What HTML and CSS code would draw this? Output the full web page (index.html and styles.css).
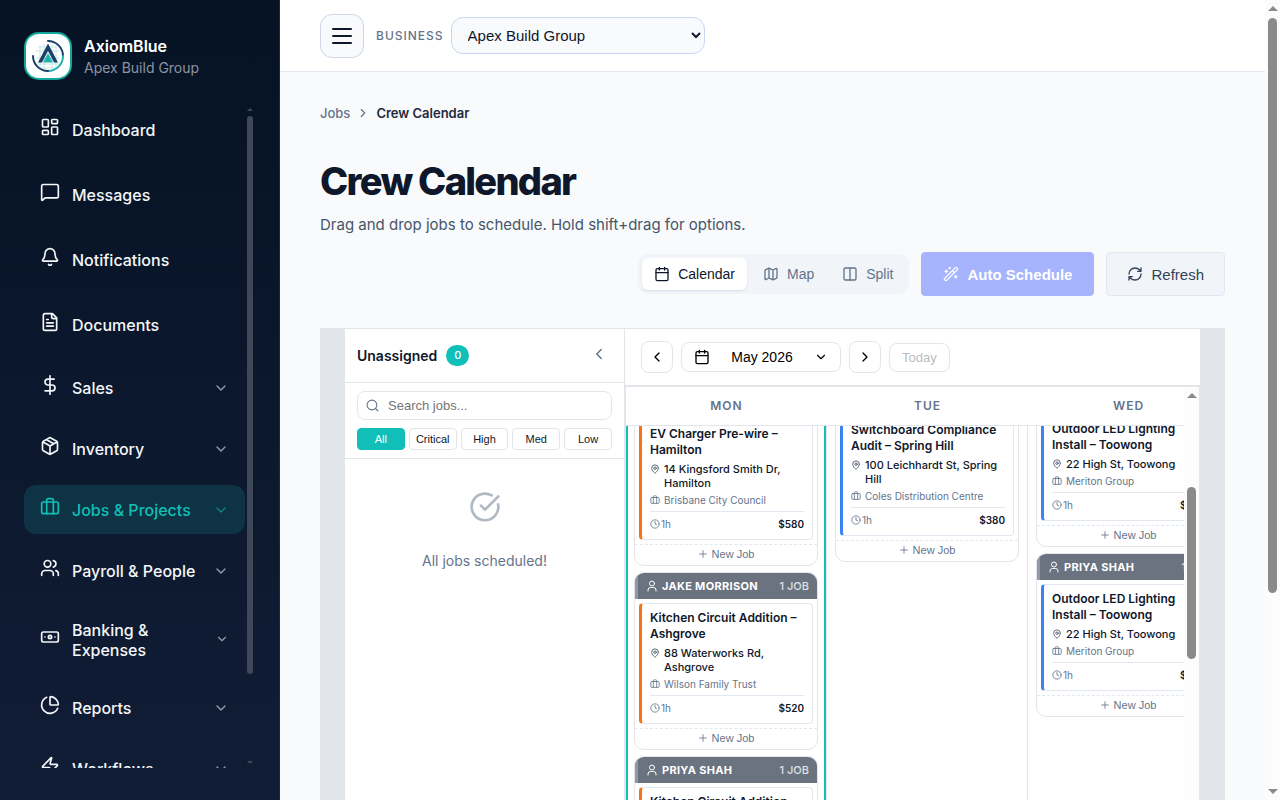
FILE: index.html
```html
<!DOCTYPE html>
<html lang="en">
<head>
<meta charset="utf-8">
<meta name="viewport" content="width=device-width, initial-scale=1">
<title>Crew Calendar</title>
<link rel="stylesheet" href="styles.css">
</head>
<body>
<svg class="sprite" aria-hidden="true">
  <symbol id="chev-down" viewBox="0 0 24 24"><path d="m6 9 6 6 6-6"/></symbol>
  <symbol id="chev-left" viewBox="0 0 24 24"><path d="m15 18-6-6 6-6"/></symbol>
  <symbol id="chev-right" viewBox="0 0 24 24"><path d="m9 18 6-6-6-6"/></symbol>
  <symbol id="calendar" viewBox="0 0 24 24"><path d="M8 2v4M16 2v4M3 10h18"/><rect x="3" y="4" width="18" height="18" rx="2"/></symbol>
  <symbol id="briefcase" viewBox="0 0 24 24"><path d="M16 20V4a2 2 0 0 0-2-2h-4a2 2 0 0 0-2 2v16"/><rect x="2" y="6" width="20" height="14" rx="2"/></symbol>
  <symbol id="pin" viewBox="0 0 24 24"><path d="M20 10c0 5-5.500 10.200-7.400 11.800a1 1 0 0 1-1.200 0C9.500 20.200 4 15 4 10a8 8 0 0 1 16 0"/><circle cx="12" cy="10" r="3"/></symbol>
  <symbol id="clock" viewBox="0 0 24 24"><circle cx="12" cy="12" r="10"/><path d="M12 6v6l4 2"/></symbol>
  <symbol id="user" viewBox="0 0 24 24"><circle cx="12" cy="7" r="5"/><path d="M4 22v-2a5 5 0 0 1 5-5h6a5 5 0 0 1 5 5v2"/></symbol>
  <symbol id="plus" viewBox="0 0 24 24"><path d="M4 12h16M12 4v16"/></symbol>
</svg>
<div class="app">
  <aside class="sidebar">
    <div class="brand">
      <svg class="logo" viewBox="0 0 48 48" aria-hidden="true">
        <rect x="1" y="1" width="46" height="46" rx="14" fill="#fff" stroke="#12a89d" stroke-width="2"/>
        <path d="M15 15h18M12 19h24M12 26h24M13 32h22M16 36h16M16 14v21M20 12v25M28 12v25M32 14v21" stroke="#c4e8e6" stroke-width="1" fill="none"/>
        <path d="M24 9a15 15 0 0 1 15 15" stroke="#1b4266" stroke-width="2" fill="none"/>
        <path d="M39 24a15 15 0 0 1-15 15" stroke="#20b2aa" stroke-width="2" fill="none"/>
        <path d="M24 39A15 15 0 0 1 9 24" stroke="#1b4266" stroke-width="2" fill="none"/>
        <path d="M14 30.500 24 11.500l10 19h-4l-6-11.500-6 11.500z" fill="#1b4266"/>
        <path d="m24 21 5 9.500H19z" fill="#20b2aa"/>
      </svg>
      <div>
        <div class="brand-name">AxiomBlue</div>
        <div class="brand-org">Apex Build Group</div>
      </div>
    </div>
    <div class="nav-wrap">
      <nav class="nav">
        <div class="nav-links">
          <a class="nav-item" href="#"><svg class="icon" viewBox="0 0 24 24"><rect x="3" y="3" width="7" height="9" rx="1"/><rect x="14" y="3" width="7" height="5" rx="1"/><rect x="14" y="12" width="7" height="9" rx="1"/><rect x="3" y="16" width="7" height="5" rx="1"/></svg><span>Dashboard</span></a>
          <a class="nav-item" href="#"><svg class="icon" viewBox="0 0 24 24"><path d="M22 17a2 2 0 0 1-2 2H6.800a2 2 0 0 0-1.400.6l-2.200 2.200A.7.7 0 0 1 2 21.300V5a2 2 0 0 1 2-2h16a2 2 0 0 1 2 2z"/></svg><span>Messages</span></a>
          <a class="nav-item" href="#"><svg class="icon" viewBox="0 0 24 24"><path d="M10.300 21a2 2 0 0 0 3.400 0M3.300 15.300A1 1 0 0 0 4 17h16a1 1 0 0 0 .7-1.700C19.400 14 18 12.500 18 8A6 6 0 0 0 6 8c0 4.500-1.400 6-2.700 7.300"/></svg><span>Notifications</span></a>
          <a class="nav-item" href="#"><svg class="icon" viewBox="0 0 24 24"><path d="M15 2H6a2 2 0 0 0-2 2v16a2 2 0 0 0 2 2h12a2 2 0 0 0 2-2V7zM14 2v4a2 2 0 0 0 2 2h4M10 9H8M16 13H8M16 17H8"/></svg><span>Documents</span></a>
        </div>
        <div class="nav-groups">
          <a class="nav-item" href="#"><svg class="icon" viewBox="0 0 24 24"><path d="M12 1v22M17 5H9.500a3.500 3.500 0 0 0 0 7h5a3.500 3.500 0 0 1 0 7H6"/></svg><span>Sales</span><svg class="chev"><use href="#chev-down"/></svg></a>
          <a class="nav-item" href="#"><svg class="icon" viewBox="0 0 24 24"><path d="M11 21.700a2 2 0 0 0 2 0l7-4A2 2 0 0 0 21 16V8a2 2 0 0 0-1-1.700l-7-4a2 2 0 0 0-2 0l-7 4A2 2 0 0 0 3 8v8a2 2 0 0 0 1 1.700zM12 22V12M3.300 7 12 12l8.700-5M7.500 4.300l9 5.100"/></svg><span>Inventory</span><svg class="chev"><use href="#chev-down"/></svg></a>
          <a class="nav-item active" href="#" aria-current="page"><svg class="icon"><use href="#briefcase"/></svg><span>Jobs &amp; Projects</span><svg class="chev"><use href="#chev-down"/></svg></a>
          <a class="nav-item" href="#"><svg class="icon" viewBox="0 0 24 24"><path d="M16 21v-2a4 4 0 0 0-4-4H6a4 4 0 0 0-4 4v2M16 3.100a4 4 0 0 1 0 7.800M22 21v-2a4 4 0 0 0-3-3.900"/><circle cx="9" cy="7" r="4"/></svg><span>Payroll &amp; People</span><svg class="chev"><use href="#chev-down"/></svg></a>
          <a class="nav-item tall" href="#"><svg class="icon" viewBox="0 0 24 24"><rect x="2" y="6" width="20" height="12" rx="2"/><circle cx="12" cy="12" r="2"/><path d="M6 12h.01M18 12h.01"/></svg><span>Banking &amp; Expenses</span><svg class="chev small"><use href="#chev-down"/></svg></a>
          <a class="nav-item" href="#"><svg class="icon" viewBox="0 0 24 24"><path d="M21 12a1 1 0 0 0 1-1A10 10 0 0 0 13 2a1 1 0 0 0-1 1v8a1 1 0 0 0 1 1zM21.200 15.900A10 10 0 1 1 8 2.800"/></svg><span>Reports</span><svg class="chev"><use href="#chev-down"/></svg></a>
          <a class="nav-item" href="#"><svg class="icon" viewBox="0 0 24 24"><path d="M4 14a1 1 0 0 1-.8-1.600l9.900-10.200a.5.5 0 0 1 .9.460l-1.900 6A1 1 0 0 0 13 10h7a1 1 0 0 1 .8 1.600l-9.900 10.200a.5.5 0 0 1-.9-.460l1.900-6A1 1 0 0 0 11 14z"/></svg><span>Workflows</span><svg class="chev"><use href="#chev-down"/></svg></a>
        </div>
      </nav>
      <div class="bar bar-nav" aria-hidden="true"><i class="up"></i><i class="thumb"></i><i class="down"></i></div>
    </div>
  </aside>

  <div class="main">
    <header class="topbar">
      <button class="menu-btn" aria-label="Toggle menu"><svg viewBox="0 0 20 16"><path d="M1 1h18M1 8h18M1 15h18"/></svg></button>
      <label class="biz-label" for="biz">BUSINESS</label>
      <select class="biz-select" id="biz"><option>Apex Build Group</option></select>
    </header>
    <main class="content">
      <nav class="crumbs" aria-label="Breadcrumb"><a href="#">Jobs</a><svg><use href="#chev-right"/></svg><span>Crew Calendar</span></nav>
      <h1>Crew Calendar</h1>
      <p class="lead">Drag and drop jobs to schedule. Hold shift+drag for options.</p>
      <div class="toolbar">
        <div class="segmented">
          <button class="seg on"><svg><use href="#calendar"/></svg>Calendar</button>
          <button class="seg"><svg viewBox="0 0 24 24"><path d="M14.100 5.600a2 2 0 0 0 1.800 0l3.700-1.900A1 1 0 0 1 21 4.600v12.800a1 1 0 0 1-.6.9l-4.500 2.200a2 2 0 0 1-1.800 0l-4.200-2.100a2 2 0 0 0-1.800 0l-3.700 1.900A1 1 0 0 1 3 19.400V6.600a1 1 0 0 1 .6-.9l4.500-2.200a2 2 0 0 1 1.800 0zM15 5.800v15M9 3.200v15"/></svg>Map</button>
          <button class="seg"><svg viewBox="0 0 24 24"><rect x="3" y="3" width="18" height="18" rx="2"/><path d="M12 3v18"/></svg>Split</button>
        </div>
        <button class="btn primary"><svg viewBox="0 0 24 24"><path d="m21.600 3.600-1.200-1.200a1.200 1.200 0 0 0-1.700 0L2.400 18.600a1.200 1.200 0 0 0 0 1.800l1.200 1.200a1.200 1.200 0 0 0 1.800 0L21.600 5.400a1.200 1.200 0 0 0 0-1.800M14 7l3 3M5 6v4M19 14v4M10 2v2M7 8H3M21 16h-4M11 3H9"/></svg>Auto Schedule</button>
        <button class="btn"><svg viewBox="0 0 24 24"><path d="M3 12a9 9 0 0 1 9-9 9.800 9.800 0 0 1 6.700 2.700L21 8M21 3v5h-5M21 12a9 9 0 0 1-9 9 9.800 9.800 0 0 1-6.700-2.700L3 16M8 16H3v5"/></svg>Refresh</button>
      </div>

      <section class="board">
        <div class="unassigned">
          <div class="un-head"><h2>Unassigned</h2><span class="badge">0</span><button aria-label="Collapse panel"><svg><use href="#chev-left"/></svg></button></div>
          <div class="un-filter">
            <div class="search"><svg viewBox="0 0 24 24"><circle cx="11" cy="11" r="9"/><path d="m22 22-4-4"/></svg><input type="text" placeholder="Search jobs..." aria-label="Search jobs"></div>
            <div class="chips"><button class="on">All</button><button>Critical</button><button>High</button><button>Med</button><button>Low</button></div>
          </div>
          <div class="empty"><svg viewBox="0 0 24 24"><path d="M21.800 10A10 10 0 1 1 17 3.300M9 11l3 3L22 4"/></svg><p>All jobs scheduled!</p></div>
        </div>
        <div class="schedule">
          <div class="cal-head">
            <button class="step" aria-label="Previous month"><svg><use href="#chev-left"/></svg></button>
            <button class="month"><svg><use href="#calendar"/></svg><span>May 2026</span><svg class="caret"><use href="#chev-down"/></svg></button>
            <button class="step" aria-label="Next month"><svg><use href="#chev-right"/></svg></button>
            <button class="today" disabled>Today</button>
          </div>
          <div class="cal-body">
            <div class="cal-view">
              <div class="days"><div>MON</div><div>TUE</div><div>WED</div></div>
              <div class="cells">
                <div class="grid">
                  <div class="col current">
                    <article class="crew">
                      <div class="lead-in"></div>
                      <div class="job high"><h3>EV Charger Pre-wire – Hamilton</h3><p class="addr"><svg><use href="#pin"/></svg>14 Kingsford Smith Dr, Hamilton</p><p class="client"><svg><use href="#briefcase"/></svg>Brisbane City Council</p><div class="meta"><svg><use href="#clock"/></svg>1h<strong>$580</strong></div></div>
                      <button class="new"><svg><use href="#plus"/></svg>New Job</button>
                    </article>
                    <article class="crew">
                      <header><svg><use href="#user"/></svg><b>JAKE MORRISON</b><span>1 JOB</span></header>
                      <div class="job high"><h3>Kitchen Circuit Addition – Ashgrove</h3><p class="addr"><svg><use href="#pin"/></svg>88 Waterworks Rd, Ashgrove</p><p class="client"><svg><use href="#briefcase"/></svg>Wilson Family Trust</p><div class="meta"><svg><use href="#clock"/></svg>1h<strong>$520</strong></div></div>
                      <button class="new"><svg><use href="#plus"/></svg>New Job</button>
                    </article>
                    <article class="crew">
                      <header><svg><use href="#user"/></svg><b>PRIYA SHAH</b><span>1 JOB</span></header>
                      <div class="job high"><h3>Kitchen Circuit Addition – Ashgrove</h3></div>
                    </article>
                  </div>
                  <div class="col second">
                    <article class="crew">
                      <div class="lead-in"></div>
                      <div class="job"><h3>Switchboard Compliance Audit – Spring Hill</h3><p class="addr"><svg><use href="#pin"/></svg>100 Leichhardt St, Spring Hill</p><p class="client"><svg><use href="#briefcase"/></svg>Coles Distribution Centre</p><div class="meta"><svg><use href="#clock"/></svg>1h<strong>$380</strong></div></div>
                      <button class="new"><svg><use href="#plus"/></svg>New Job</button>
                    </article>
                  </div>
                  <div class="col">
                    <article class="crew">
                      <div class="lead-in"></div>
                      <div class="job"><h3>Outdoor LED Lighting Install – Toowong</h3><p class="addr"><svg><use href="#pin"/></svg>22 High St, Toowong</p><p class="client"><svg><use href="#briefcase"/></svg>Meriton Group</p><div class="meta"><svg><use href="#clock"/></svg>1h<strong>$450</strong></div></div>
                      <button class="new"><svg><use href="#plus"/></svg>New Job</button>
                    </article>
                    <article class="crew">
                      <header><svg><use href="#user"/></svg><b>PRIYA SHAH</b><span>1 JOB</span></header>
                      <div class="job"><h3>Outdoor LED Lighting Install – Toowong</h3><p class="addr"><svg><use href="#pin"/></svg>22 High St, Toowong</p><p class="client"><svg><use href="#briefcase"/></svg>Meriton Group</p><div class="meta"><svg><use href="#clock"/></svg>1h<strong>$450</strong></div></div>
                      <button class="new"><svg><use href="#plus"/></svg>New Job</button>
                    </article>
                  </div>
                </div>
              </div>
            </div>
            <div class="bar bar-cal" aria-hidden="true"><i class="up"></i><i class="thumb"></i></div>
          </div>
        </div>
      </section>
    </main>
  </div>
  <div class="bar bar-page" aria-hidden="true"><i class="up"></i><i class="thumb"></i><i class="down"></i></div>
</div>
</body>
</html>
```
FILE: styles.css
```css
* { box-sizing: border-box; }
body { margin: 0; font-family: Inter, "Liberation Sans", sans-serif; color: #0f172a; background: #f8fafc; }
h1, h2, h3, p { margin: 0; }
a { color: inherit; text-decoration: none; }
button { font-family: "Liberation Sans", Arial, sans-serif; color: inherit; padding: 0; margin: 0; border: 0; background: none; }
svg { fill: none; stroke: currentColor; stroke-width: 2; stroke-linecap: round; stroke-linejoin: round; flex: none; }
.sprite { position: absolute; width: 0; height: 0; }

.app { display: flex; height: 100vh; overflow: hidden; }

/* Sidebar */
.sidebar { width: 280px; flex: none; display: flex; flex-direction: column; padding: 32px 24px; background: linear-gradient(#061325, #0a172c 45%, #101d35); border-right: 1px solid #1b2840; color: #fff; }
.brand { display: flex; align-items: center; gap: 12px; padding-bottom: 24px; }
.logo { width: 48px; height: 48px; stroke: none; }
.brand-name { font-size: 16px; font-weight: 600; line-height: 24px; }
.brand-org { font-size: 14px; line-height: 20px; color: #8d95a1; }
.nav-wrap { flex: 1; min-height: 0; display: flex; gap: 2px; margin-right: 2px; }
.nav { flex: 1; min-width: 0; overflow: hidden; padding-top: 1px; }
.nav-links { display: flex; flex-direction: column; gap: 16px; margin-bottom: 14px; }
.nav-groups { display: flex; flex-direction: column; gap: 12px; }
.nav-item { display: flex; align-items: center; gap: 12px; min-height: 49px; padding: 0 16px; border-radius: 12px; font-size: 16px; font-weight: 500; line-height: 20px; color: #f4f6f8; }
.nav-item.tall { min-height: 64px; }
.nav-item span { flex: 1; padding-top: 1px; }
.nav-item .icon { width: 20px; height: 20px; stroke-width: 2; margin-bottom: 5px; }
.nav-item .chev { width: 16px; height: 16px; opacity: .6; }
.nav-item .chev.small { width: 14px; height: 14px; }
.nav-item.active { background: #0d3344; color: #12bfb5; }

/* Scroll bars */
.bar { flex: none; display: flex; flex-direction: column; align-items: center; color: #8a8a8a; background: #fcfcfc; width: 15px; }
.bar i { display: block; }
.bar .thumb { width: 9px; border-radius: 5px; background: #8a8a8a; }
.bar .up, .bar .down { border: 5px solid transparent; border-top-width: 0; border-bottom: 5px solid currentColor; }
.bar .down { border-bottom-width: 0; border-top: 5px solid currentColor; margin-top: auto; }
.bar-page { padding: 6px 0; }
.bar-page .thumb { height: 73%; margin-top: 7px; }
.bar-cal { padding-top: 6px; }
.bar-cal .thumb { height: 172px; margin-top: 89px; }
.bar-nav { width: 6px; padding: 4px 0; color: #3f4858; background: none; }
.bar-nav .up, .bar-nav .down { border-left-width: 3px; border-right-width: 3px; border-bottom-width: 3px; }
.bar-nav .down { border-top-width: 3px; border-bottom-width: 0; }
.bar-nav .thumb { width: 6px; height: 85%; margin-top: 5px; border-radius: 3px; background: #3f4858; }

/* Top bar */
.main { flex: 1; min-width: 0; display: flex; flex-direction: column; }
.topbar { flex: none; display: flex; align-items: center; height: 72px; padding: 0 40px; background: #fff; border-bottom: 1px solid #e2e8f0; }
.menu-btn { width: 44px; height: 44px; display: grid; place-items: center; border: 1px solid #cfd6e8; border-radius: 12px; background: #f8fafc; }
.menu-btn svg { width: 20px; height: 16px; }
.biz-label { margin: 0 7px 0 12px; font-size: 12px; font-weight: 500; letter-spacing: 1px; color: #64748b; }
.biz-select { width: 254px; height: 37px; padding: 0 12px; border: 1px solid #c9d5f2; border-radius: 12px; background: #f8fafc; color: #0f172a; font: 15px "Liberation Sans", Arial, sans-serif; }

/* Page heading */
.content { flex: 1; min-height: 0; display: flex; flex-direction: column; padding: 31px 40px 0; }
.crumbs { display: flex; align-items: center; gap: 6px; font-size: 13px; line-height: 20px; font-weight: 500; color: #64748b; }
.crumbs svg { width: 14px; height: 14px; }
.crumbs span { font-weight: 600; color: #1e293b; }
h1 { margin-top: 34px; font-size: 38px; line-height: 48px; font-weight: 800; letter-spacing: -0.045em; }
.lead { margin-top: 7px; font-size: 15px; line-height: 26px; color: #475569; }
.toolbar { display: flex; justify-content: flex-end; align-items: center; gap: 12px; margin-top: 14px; }
.segmented { display: flex; gap: 4px; padding: 4px; border-radius: 10px; background: #f1f5f9; }
.seg { display: flex; align-items: center; gap: 8px; height: 32px; padding: 0 12px; border-radius: 6px; font-size: 14px; color: #64748b; }
.seg svg, .btn svg { width: 16px; height: 16px; }
.seg.on { background: #fff; color: #0f172a; box-shadow: 0 1px 2px #0f172a1a; }
.btn { display: flex; align-items: center; gap: 8px; height: 44px; padding: 0 20px; border: 1px solid #e2e8f0; border-radius: 4px; background: #f1f5f9; color: #334155; font-size: 15px; }
.btn.primary { padding: 0 21px; border-color: #a5b4fc; background: #a5b4fc; color: #fff; font-weight: 700; }

/* Board */
.board { flex: 1; min-height: 0; display: flex; margin-top: 32px; padding: 0 25px; border-top: 1px solid #e2e6ea; background: #e2e6eb; }
.unassigned { width: 280px; flex: none; background: #fff; border-right: 1px solid #e2e6eb; }
.un-head { display: flex; align-items: center; height: 54px; padding: 0 12px; border-bottom: 1px solid #e2e6eb; }
.un-head h2 { font-size: 14px; font-weight: 600; }
.badge { margin-left: 9px; padding: 0 8px; border-radius: 11px; background: #10bfb8; color: #fff; font-size: 11px; font-weight: 500; line-height: 21px; }
.un-head button { margin-left: auto; padding: 0 4px 3px; color: #64748b; }
.un-head svg { display: block; width: 18px; height: 18px; }
.un-filter { padding: 8px 12px; border-bottom: 1px solid #e2e6eb; }
.search { display: flex; align-items: center; gap: 9px; height: 29px; padding: 0 8px; border: 1px solid #e2e6eb; border-radius: 8px; color: #64748b; }
.search svg { width: 13px; height: 13px; }
.search input { flex: 1; min-width: 0; padding: 0; border: 0; outline: 0; background: none; font: 13px "Liberation Sans", Arial, sans-serif; }
.search input::placeholder { color: #757575; }
.chips { display: grid; grid-template-columns: repeat(5, 1fr); gap: 4px; margin-top: 8px; }
.chips button { height: 22px; border: 1px solid #e2e6eb; border-radius: 4px; font-size: 11px; }
.chips .on { border-color: #10bfb8; background: #10bfb8; color: #fff; }
.empty { display: flex; flex-direction: column; align-items: center; padding-top: 32px; color: #64748b; font-size: 14px; line-height: 20px; }
.empty svg { width: 32px; height: 32px; margin-bottom: 28px; opacity: .5; }

.schedule { flex: 1; min-width: 0; display: flex; flex-direction: column; background: #fff; }
.cal-head { flex: none; display: flex; align-items: center; gap: 8px; height: 58px; padding: 0 16px; border-bottom: 2px solid #e2e6eb; }
.cal-head button { border: 1px solid #e2e6eb; border-radius: 8px; color: #000; }
.step { width: 32px; height: 32px; display: grid; place-items: center; }
.cal-head svg { width: 16px; height: 16px; }
.month { display: flex; align-items: center; width: 160px; height: 30px; padding: 0 12px; font-size: 14px; }
.month span { flex: 1; }
.cal-head .caret { width: 14px; height: 14px; }
.cal-head .today { height: 29px; padding: 0 12px; font-size: 13px; color: #b8bcc2; }
.cal-body { flex: 1; min-height: 0; display: flex; border-left: 1px solid #e2e6eb; border-right: 1px solid #e2e6eb; }
.cal-view { flex: 1; min-width: 0; overflow: hidden; display: flex; flex-direction: column; }
.days, .grid { display: grid; grid-template-columns: repeat(3, 201px); }
.days { flex: none; border-bottom: 1px solid #e2e6eb; font-size: 12px; font-weight: 600; line-height: 38px; letter-spacing: 1px; text-align: center; color: #64748b; }
.cells { flex: 1; min-height: 0; overflow: hidden; }
.grid { margin-top: -51px; min-height: 600px; }
.col { padding: 8px; border-right: 1px solid #e2e6eb; display: flex; flex-direction: column; gap: 6px; }
.col.second { padding-top: 9px; }
.col.current { padding-top: 13px; box-shadow: inset 2px 0 #10bfb8, inset -2px 0 #10bfb8; }
.crew { border: 1px solid #e2e6eb; border-radius: 10px; overflow: hidden; flex: none; }
.crew header { display: flex; align-items: center; gap: 4px; height: 26px; padding: 0 8px; border-left: 3px solid #9299a4; background: #6b7280; color: #fff; font-size: 11px; }
.lead-in { height: 26px; background: #6b7280; }
.crew header svg { width: 12px; height: 12px; }
.crew header b { letter-spacing: 0.3px; }
.crew header span { margin-left: auto; color: #dfe2e6; font-weight: 500; }
.job { margin: 4px; padding: 6px 8px 7px; border: 1px solid #e2e8f0; border-left: 3px solid #3b82f6; border-radius: 4px; font-size: 11px; color: #64748b; }
.job.high { border-left-color: #f97316; }
.job h3 { font-size: 12px; font-weight: 600; line-height: 16px; color: #0f172a; }
.job p { display: flex; gap: 4px; }
.job svg { width: 10px; height: 10px; }
.job .addr { margin-top: 4px; line-height: 14px; font-weight: 500; color: #0f172a; }
.job .addr svg { margin-top: 2px; color: #475569; }
.job .client { margin-top: 3px; font-size: 10px; line-height: 14px; align-items: center; }
.job .meta { display: flex; align-items: center; gap: 1px; margin-top: 4px; padding-top: 4px; border-top: 1px solid #e2e8f0; font-size: 10px; line-height: 16px; }
.job .meta strong { margin-left: auto; font-weight: 600; color: #0f172a; }
.new { width: 100%; height: 21px; display: flex; align-items: center; justify-content: center; gap: 4px; padding-bottom: 2px; border-top: 1px dashed #e2e8f0; font-size: 11px; color: #64748b; }
.new svg { width: 10px; height: 10px; }
```
